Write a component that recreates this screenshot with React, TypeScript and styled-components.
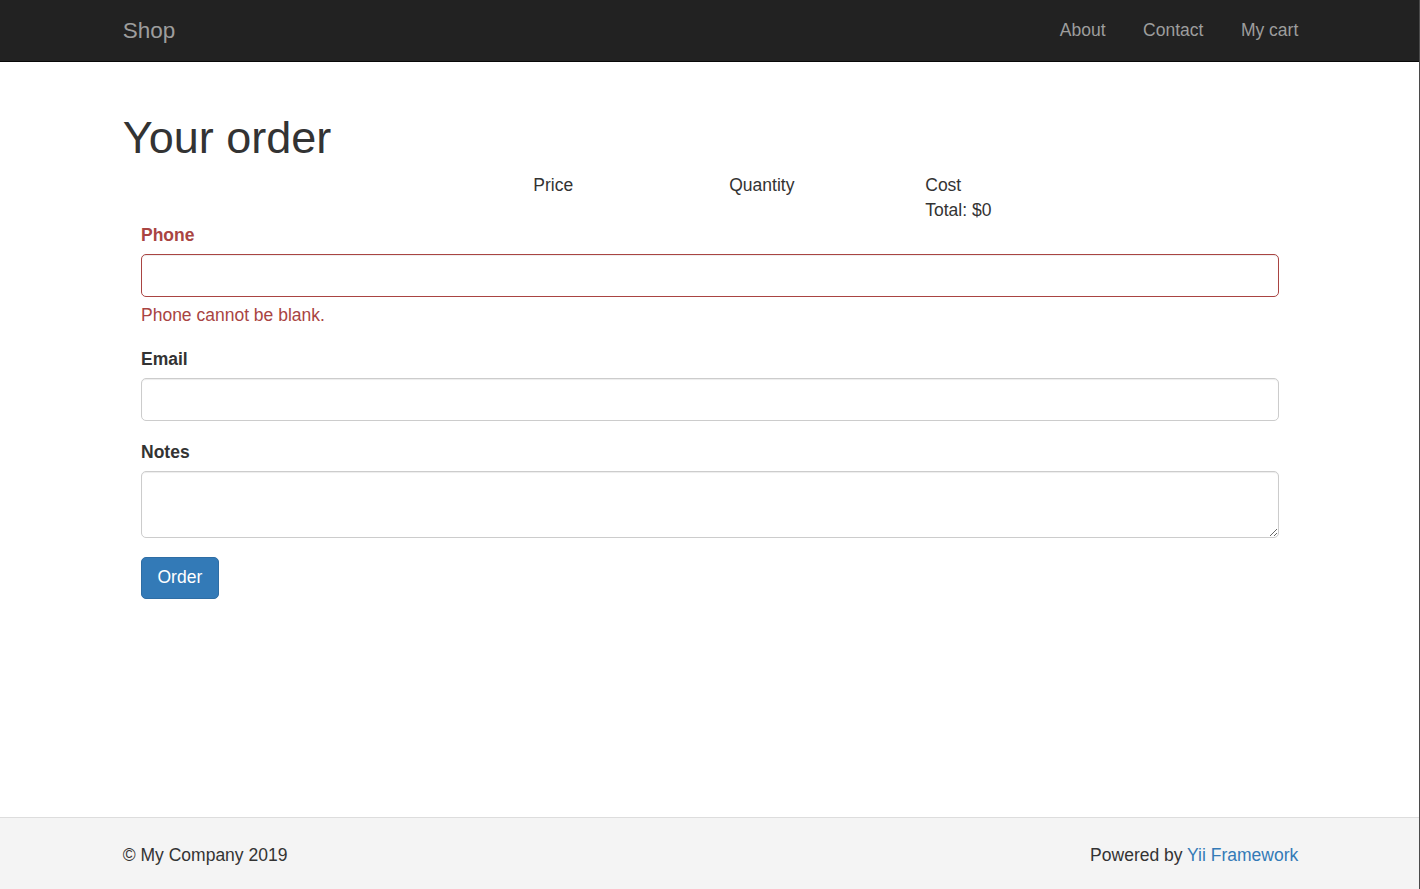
import React from "react";
import styled, { createGlobalStyle } from "styled-components";

const GlobalStyle = createGlobalStyle`
  html, body {
    margin: 0;
    padding: 0;
    background: #fff;
  }
  body {
    font-family: "Liberation Sans", Arial, Helvetica, sans-serif;
    font-size: 17.5px;
    line-height: 25px;
    color: #333;
  }
  * {
    box-sizing: border-box;
  }
`;

const Frame = styled.div`
  display: flex;
  flex-direction: column;
  width: 1420px;
  height: 889px;
  border-right: 1px solid #4a4a4a;
  overflow: hidden;
`;

const Container = styled.div`
  width: 1213px;
  margin: 0 0 0 104px;
  padding: 0 18.75px;
`;

const Navbar = styled.nav`
  flex: none;
  height: 62px;
  background: #222;
  border-bottom: 1px solid #080808;
`;

const NavInner = styled(Container)`
  display: flex;
  justify-content: space-between;
  align-items: flex-start;
`;

const Brand = styled.a`
  display: block;
  padding: 18px 0 0;
  font-size: 22.5px;
  line-height: 25px;
  color: #9d9d9d;
  text-decoration: none;
`;

const NavList = styled.ul`
  display: flex;
  list-style: none;
  margin: 0 -18.75px 0 0;
  padding: 0;
`;

const NavLink = styled.a`
  display: block;
  padding: 17.5px 18.75px;
  line-height: 25px;
  color: #9d9d9d;
  text-decoration: none;
`;

const Main = styled.main`
  flex: 1;
  padding-top: 25.5px;
`;

const Title = styled.h1`
  margin: 25px 0 10.5px;
  font-size: 45px;
  line-height: 49.5px;
  font-weight: 500;
  color: #333;
`;

const CartGrid = styled.div`
  display: grid;
  grid-template-columns: 410.5px 196px 196px 1fr;
  line-height: 25px;
`;

const Form = styled.form`
  padding: 0 19.5px 0 18.25px;
`;

const FormGroup = styled.div`
  margin-bottom: 18.75px;
`;

const Label = styled.label<{ $error?: boolean }>`
  display: inline-block;
  margin-bottom: 6.25px;
  font-weight: 700;
  color: ${(p) => (p.$error ? "#a94442" : "#333")};
`;

const Input = styled.input<{ $error?: boolean }>`
  display: block;
  width: 100%;
  height: 43px;
  padding: 7.5px 15px;
  font-family: inherit;
  font-size: 17.5px;
  line-height: 25px;
  color: #555;
  background: #fff;
  border: 1px solid ${(p) => (p.$error ? "#a94442" : "#ccc")};
  border-radius: 5px;
  box-shadow: inset 0 1px 1px rgba(0, 0, 0, 0.075);
  outline: none;
`;

const TextArea = styled.textarea`
  display: block;
  width: 100%;
  height: 67px;
  padding: 7.5px 15px;
  font-family: inherit;
  font-size: 17.5px;
  line-height: 25px;
  color: #555;
  background: #fff;
  border: 1px solid #ccc;
  border-radius: 5px;
  box-shadow: inset 0 1px 1px rgba(0, 0, 0, 0.075);
  outline: none;
`;

const HelpBlock = styled.div`
  margin-top: 6.25px;
  margin-bottom: 12.5px;
  color: #a94442;
`;

const Button = styled.button`
  display: inline-block;
  height: 42px;
  padding: 7px 15.5px;
  font-family: inherit;
  font-size: 17.5px;
  line-height: 25px;
  color: #fff;
  background: #337ab7;
  border: 1px solid #2e6da4;
  border-radius: 5px;
  cursor: pointer;
`;

const Footer = styled.footer`
  flex: none;
  height: 72px;
  padding-top: 25px;
  background: #f4f4f4;
  border-top: 1px solid #ddd;
`;

const FooterInner = styled(Container)`
  display: flex;
  justify-content: space-between;
`;

const Link = styled.a`
  color: #337ab7;
  text-decoration: none;
`;

const App = () => {
  return (
    <>
      <GlobalStyle />
      <Frame>
        <Navbar>
          <NavInner>
            <Brand href="#">Shop</Brand>
            <NavList>
              {["About", "Contact", "My cart"].map((item) => (
                <li key={item}>
                  <NavLink href="#">{item}</NavLink>
                </li>
              ))}
            </NavList>
          </NavInner>
        </Navbar>

        <Main>
          <Container>
            <Title>Your order</Title>
            <CartGrid>
              <span />
              <span>Price</span>
              <span>Quantity</span>
              <span>Cost</span>
              <span />
              <span />
              <span />
              <span>Total: $0</span>
            </CartGrid>

            <Form onSubmit={(e) => e.preventDefault()}>
              <FormGroup>
                <Label $error>Phone</Label>
                <Input $error type="text" />
                <HelpBlock>Phone cannot be blank.</HelpBlock>
              </FormGroup>
              <FormGroup>
                <Label>Email</Label>
                <Input type="text" />
              </FormGroup>
              <FormGroup>
                <Label>Notes</Label>
                <TextArea rows={2} />
              </FormGroup>
              <Button type="submit">Order</Button>
            </Form>
          </Container>
        </Main>

        <Footer>
          <FooterInner>
            <span>© My Company 2019</span>
            <span>
              Powered by <Link href="#">Yii Framework</Link>
            </span>
          </FooterInner>
        </Footer>
      </Frame>
    </>
  );
};

export default App;
